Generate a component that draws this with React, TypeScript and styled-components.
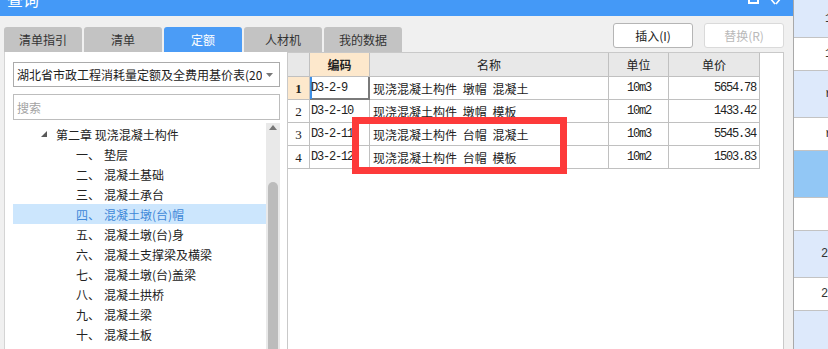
import React from 'react';
import styled, { createGlobalStyle, css } from 'styled-components';

const Global = createGlobalStyle`
  html, body { margin: 0; padding: 0; }
  body {
    width: 828px; height: 349px; overflow: hidden; background: #f0f0f0;
    font-family: "Noto Sans CJK SC", "Noto Sans", sans-serif; font-size: 12px; color: #222;
  }
  * { box-sizing: border-box; }
`;

const Page = styled.div`
  display: flex; width: 828px; height: 349px; overflow: hidden;
`;

const Dialog = styled.div`
  width: 793px; flex: none; display: flex; flex-direction: column; background: #f0f0f0;
`;

const TitleBar = styled.div`
  height: 16px; flex: none; background: #4499f7; display: flex; align-items: flex-start;
  overflow: hidden; padding: 0 12px 0 7px; color: #fff;
`;

const Title = styled.span`
  font-size: 16px; line-height: 16px; margin-top: -9px; flex: 1;
`;

const WinControls = styled.div`
  display: flex; gap: 11px; align-items: flex-start; flex: none;
`;

const Toolbar = styled.div`
  height: 36px; flex: none; display: flex; padding: 0 9px 0 4px;
`;

const Tabs = styled.div`
  display: flex; gap: 2px; align-self: flex-end;
`;

const Tab = styled.div<{ $active?: boolean }>`
  width: 78px; height: 25px; border-radius: 3px 3px 0 0; display: flex; align-items: center;
  justify-content: center; font-size: 12px;
  background: ${p => (p.$active ? '#4b9cf6' : '#c3c3c3')};
  color: ${p => (p.$active ? '#fff' : '#333')};
`;

const Buttons = styled.div`
  margin-left: auto; margin-top: 7px; display: flex; gap: 11px; align-self: flex-start;
`;

const Button = styled.div<{ $disabled?: boolean }>`
  width: 80px; height: 25px; border-radius: 3px; background: #fff; display: flex;
  align-items: center; justify-content: center; font-size: 12px;
  border: 1px solid ${p => (p.$disabled ? '#dadada' : '#b5b5b5')};
  color: ${p => (p.$disabled ? '#b9b9b9' : '#222')};
`;

const Main = styled.div`
  flex: 1; min-height: 0; display: flex; padding: 0 9px 0 4px;
`;

const LeftPanel = styled.div`
  width: 283px; flex: none; background: #fff; border-left: 1px solid #d4d4d4;
  padding: 10px 7px 0 8px; display: flex; flex-direction: column; overflow: hidden;
`;

const Select = styled.div`
  height: 25px; flex: none; border: 1px solid #ababab; display: flex; align-items: center;
  padding: 0 6px 0 3px; gap: 4px;
`;

const SelectText = styled.span`
  flex: 1; white-space: nowrap; overflow: hidden; font-size: 12px; color: #222;
`;

const SearchInput = styled.input`
  margin-top: 7px; height: 26px; flex: none; width: 100%; border: 1px solid #bdbdbd;
  padding: 0 3px; font: inherit; font-size: 12px; color: #222; outline: none;
  &::placeholder { color: #a3a3a3; }
`;

const TreeBox = styled.div`
  margin-top: 2px; flex: 1; min-height: 0; display: flex;
`;

const TreeList = styled.div`
  flex: 1; padding-top: 2px; overflow: hidden;
`;

const TreeRow = styled.div<{ $level: number; $selected?: boolean }>`
  height: 20px; display: flex; align-items: center; white-space: nowrap;
  padding-left: ${p => (p.$level === 0 ? 27 : 63)}px;
  ${p => p.$selected && css`background: #cce6fd; color: #3f88d8;`}
`;

const Caret = styled.svg`
  width: 8px; height: 8px; margin-right: 8px; flex: none;
`;

const ItemNum = styled.span`
  display: inline-block; min-width: 28px;
`;

const ScrollBar = styled.div`
  width: 14px; flex: none; background: #e9e9e9; display: flex; flex-direction: column;
  align-items: center; margin-top: 1px;
`;

const ScrollArrow = styled.svg`
  width: 8px; height: 5px; margin-top: 2px; flex: none;
`;

const ScrollThumb = styled.div`
  width: 10px; flex: 1; margin-top: 52px; background: #bcbcbc; border-radius: 5px 5px 0 0;
`;

const GridPanel = styled.div`
  flex: 1; background: #fff; border: 1px solid #c9c9c9; border-bottom: none; position: relative;
`;

const Grid = styled.div`
  display: grid; grid-template-columns: 22px 60px 239px 60px 91px; width: 472px;
`;

const HeadCell = styled.div<{ $peach?: boolean }>`
  height: 24px; border-right: 1px solid #c0c0c0; border-bottom: 1px solid #c0c0c0;
  background: ${p => (p.$peach ? '#fde8cc' : '#e8e8e8')};
  font-weight: ${p => (p.$peach ? 700 : 400)};
  display: flex; align-items: center; justify-content: center; font-size: 12px;
`;

const NumCell = styled.div<{ $peach?: boolean }>`
  height: 23px; border-right: 1px solid #c0c0c0; border-bottom: 1px solid #c0c0c0;
  background: ${p => (p.$peach ? '#fde8cc' : '#fff')};
  font-weight: ${p => (p.$peach ? 700 : 400)};
  font-family: "Liberation Serif", "DejaVu Serif", serif; font-size: 13px;
  display: flex; align-items: center; justify-content: center; padding-top: 2px;
`;

const Cell = styled.div<{ $align?: 'left' | 'center' | 'right'; $mono?: boolean; $focus?: boolean }>`
  height: 23px; border-right: 1px solid ${p => (p.$focus ? '#7a7a7a' : '#c0c0c0')};
  border-bottom: 1px solid ${p => (p.$focus ? '#7a7a7a' : '#c0c0c0')};
  display: flex; align-items: center; white-space: nowrap; overflow: hidden;
  word-spacing: 3px;
  justify-content: ${p => (p.$align === 'right' ? 'flex-end' : p.$align === 'center' ? 'center' : 'flex-start')};
  padding: ${p => (p.$align === 'right' ? '0 3px 0 0' : p.$mono ? '0 0 0 1px' : '0 0 0 3px')};
  ${p => p.$mono && css`
    font-family: "Liberation Mono", "DejaVu Sans Mono", monospace; font-size: 12px; letter-spacing: -1.2px;
    word-spacing: 0;
  `}
  ${p => p.$focus && css`box-shadow: inset 2px 0 0 #3d8fe6, inset -1px -1px 0 #7a7a7a;`}
`;

const RedBox = styled.div`
  position: absolute; left: 64px; top: 64px; width: 215px; height: 57px;
  border: 7px solid #fd3a3a; pointer-events: none;
`;

const RightPanel = styled.div`
  flex: 1; border-left: 1px solid #a9a9a9; display: flex; flex-direction: column; overflow: hidden;
`;

const RPRow = styled.div<{ $h: number; $tone: 'light' | 'white' | 'strong'; $pad: number }>`
  height: ${p => p.$h}px; flex: none; border-bottom: 1px solid #c3c3c3;
  background: ${p => (p.$tone === 'light' ? '#dde9fb' : p.$tone === 'strong' ? '#92c7f5' : '#fff')};
  display: flex; align-items: center; padding-left: ${p => p.$pad}px; white-space: nowrap;
  font-family: "Liberation Mono", "DejaVu Sans Mono", monospace; font-size: 12px; color: #333;
  letter-spacing: -1px;
`;

const RPFill = styled.div`
  flex: 1; background: #dde9fb;
`;

const tabs = ['清单指引', '清单', '定额', '人材机', '我的数据'];

const tree = [
  { level: 0, text: '第二章 现浇混凝土构件' },
  { level: 1, num: '一、', text: '垫层' },
  { level: 1, num: '二、', text: '混凝土基础' },
  { level: 1, num: '三、', text: '混凝土承台' },
  { level: 1, num: '四、', text: '混凝土墩(台)帽', selected: true },
  { level: 1, num: '五、', text: '混凝土墩(台)身' },
  { level: 1, num: '六、', text: '混凝土支撑梁及横梁' },
  { level: 1, num: '七、', text: '混凝土墩(台)盖梁' },
  { level: 1, num: '八、', text: '混凝土拱桥' },
  { level: 1, num: '九、', text: '混凝土梁' },
  { level: 1, num: '十、', text: '混凝土板' },
  { level: 1, num: '十一、', text: '混凝土挡墙' },
];

const rows = [
  { code: 'D3-2-9', name: '现浇混凝土构件 墩帽 混凝土', unit: '10m3', price: '5654.78' },
  { code: 'D3-2-10', name: '现浇混凝土构件 墩帽 模板', unit: '10m2', price: '1433.42' },
  { code: 'D3-2-11', name: '现浇混凝土构件 台帽 混凝土', unit: '10m3', price: '5545.34' },
  { code: 'D3-2-12', name: '现浇混凝土构件 台帽 模板', unit: '10m2', price: '1503.83' },
];

const rpRows: { h: number; tone: 'light' | 'white' | 'strong'; text: string; pad: number }[] = [
  { h: 38, tone: 'light', text: '1', pad: 31 },
  { h: 33, tone: 'white', text: '1', pad: 31 },
  { h: 47, tone: 'light', text: 'r', pad: 31 },
  { h: 33, tone: 'white', text: 'r', pad: 31 },
  { h: 47, tone: 'strong', text: '', pad: 28 },
  { h: 33, tone: 'white', text: '', pad: 28 },
  { h: 47, tone: 'light', text: '2(', pad: 27 },
  { h: 33, tone: 'white', text: '2(', pad: 27 },
];

export default function App() {
  return (
    <>
      <Global />
      <Page>
        <Dialog>
          <TitleBar>
            <Title>查询</Title>
            <WinControls>
              <svg width="11" height="6" viewBox="0 0 11 6">
                <path d="M1 0 V3 H10 V0" fill="none" stroke="#fff" strokeWidth="2" />
              </svg>
              <svg width="11" height="6" viewBox="0 0 11 6">
                <path d="M0 -2 L5 4 M11 -2 L6 4" fill="none" stroke="#fff" strokeWidth="1.6" />
              </svg>
            </WinControls>
          </TitleBar>
          <Toolbar>
            <Tabs>
              {tabs.map(t => (
                <Tab key={t} $active={t === '定额'}>{t}</Tab>
              ))}
            </Tabs>
            <Buttons>
              <Button>插入(I)</Button>
              <Button $disabled>替换(R)</Button>
            </Buttons>
          </Toolbar>
          <Main>
            <LeftPanel>
              <Select>
                <SelectText>湖北省市政工程消耗量定额及全费用基价表(20</SelectText>
                <svg width="7" height="4" viewBox="0 0 7 4">
                  <path d="M0 0 H7 L3.5 4 Z" fill="#777" />
                </svg>
              </Select>
              <SearchInput placeholder="搜索" readOnly />
              <TreeBox>
                <TreeList>
                  {tree.map((n, i) => (
                    <TreeRow key={i} $level={n.level} $selected={n.selected}>
                      {n.level === 0 ? (
                        <>
                          <Caret viewBox="0 0 8 8">
                            <path d="M7 1 V7 H1 Z" fill="#595959" />
                          </Caret>
                          <span>{n.text}</span>
                        </>
                      ) : (
                        <>
                          <ItemNum>{n.num}</ItemNum>
                          <span>{n.text}</span>
                        </>
                      )}
                    </TreeRow>
                  ))}
                </TreeList>
                <ScrollBar>
                  <ScrollArrow viewBox="0 0 8 5">
                    <path d="M0 5 L4 0 L8 5 Z" fill="#777" />
                  </ScrollArrow>
                  <ScrollThumb />
                </ScrollBar>
              </TreeBox>
            </LeftPanel>
            <GridPanel>
              <Grid>
                <HeadCell />
                <HeadCell $peach>编码</HeadCell>
                <HeadCell>名称</HeadCell>
                <HeadCell>单位</HeadCell>
                <HeadCell>单价</HeadCell>
                {rows.map((r, i) => (
                  <React.Fragment key={r.code}>
                    <NumCell $peach={i === 0}>{i + 1}</NumCell>
                    <Cell $mono $focus={i === 0}>{r.code}</Cell>
                    <Cell>{r.name}</Cell>
                    <Cell $mono $align="center">{r.unit}</Cell>
                    <Cell $mono $align="right">{r.price}</Cell>
                  </React.Fragment>
                ))}
              </Grid>
              <RedBox />
            </GridPanel>
          </Main>
        </Dialog>
        <RightPanel>
          {rpRows.map((r, i) => (
            <RPRow key={i} $h={r.h} $tone={r.tone} $pad={r.pad}>{r.text}</RPRow>
          ))}
          <RPFill />
        </RightPanel>
      </Page>
    </>
  );
}
